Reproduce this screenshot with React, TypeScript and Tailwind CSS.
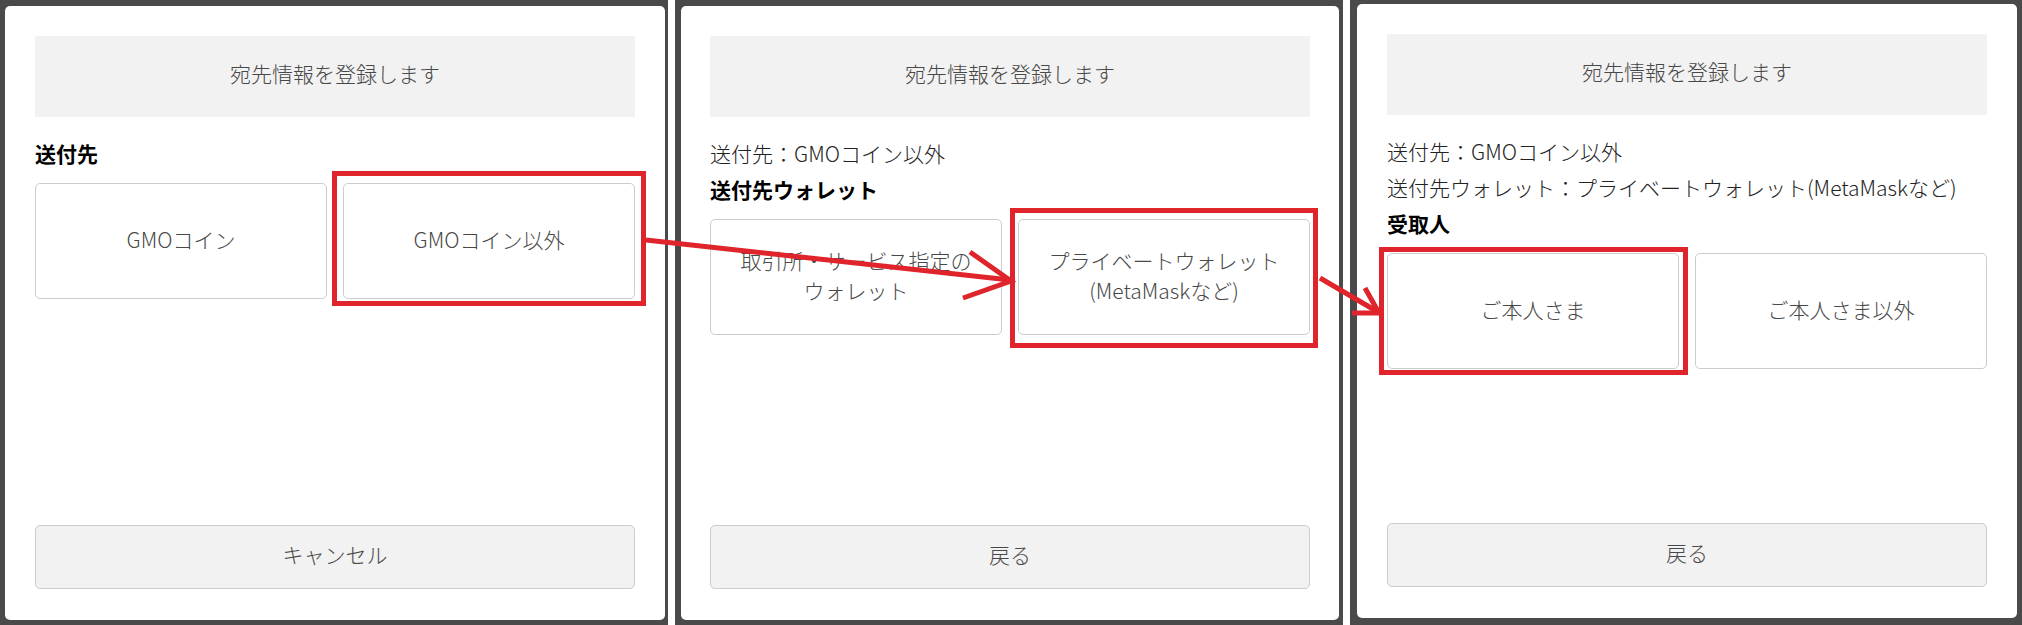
import React from "react";

type ChoiceProps = {
  children: React.ReactNode;
  mark?: string;
};

// option tile, optional red frame drawn over it
const Choice = ({ children, mark }: ChoiceProps) => (
  <div className="relative flex items-center justify-center rounded-[5px] border border-[#cccccc] bg-white pb-[5px] text-center text-[21px] leading-[30px] font-light text-[#484848]">
    <span>{children}</span>
    {mark && <div className={`absolute border-[5px] border-[#e0242b] ${mark}`} />}
  </div>
);

type ModalProps = {
  lines: string[];
  label: string;
  choices: React.ReactNode;
  footer: string;
  pad: string;
};

const Modal = ({ lines, label, choices, footer, pad }: ModalProps) => (
  <div className={`flex flex-1 flex-col rounded-[5px] bg-white pt-[30px] pb-[31px] ${pad}`}>
    <div className="flex h-[81px] items-center justify-center bg-[#f2f2f2] pb-[6px] text-[21px] font-light text-[#484848]">
      宛先情報を登録します
    </div>
    <div className="mt-[18px] text-[21px]">
      {lines.map((l) => (
        <p key={l} className="h-[36px] leading-[36px] font-light text-[#222222] whitespace-nowrap">
          {l}
        </p>
      ))}
      <p className="h-[36px] leading-[36px] font-bold text-black">{label}</p>
    </div>
    <div className="mt-[12px] grid h-[116px] grid-cols-2 gap-[16px]">{choices}</div>
    <div className="mt-auto flex h-[64px] items-center justify-center rounded-[5px] border border-[#cccccc] bg-[#f2f2f2] pb-[5px] text-[21px] font-light text-[#484848]">
      {footer}
    </div>
  </div>
);

export default function App() {
  return (
    <div className="relative flex h-[625px] w-[2022px] gap-[7px] overflow-hidden bg-white font-['Noto_Sans_CJK_JP','Noto_Sans',sans-serif]">
      {/* step 1 */}
      <div className="flex w-[668px] bg-[#4a4a4a] pl-[5px] pr-[3px] pt-[6px] pb-[5px]">
        <Modal
          pad="px-[30px]"
          lines={[]}
          label="送付先"
          footer="キャンセル"
          choices={
            <>
              <Choice>GMOコイン</Choice>
              <Choice mark="-left-[12px] -right-[12px] -top-[13px] -bottom-[8px]">GMOコイン以外</Choice>
            </>
          }
        />
      </div>

      {/* step 2 */}
      <div className="flex w-[668px] bg-[#4a4a4a] pl-[6px] pr-[4px] pt-[6px] pb-[5px]">
        <Modal
          pad="px-[29px]"
          lines={["送付先：GMOコイン以外"]}
          label="送付先ウォレット"
          footer="戻る"
          choices={
            <>
              <Choice>
                取引所・サービス指定の
                <br />
                ウォレット
              </Choice>
              <Choice mark="-left-[9px] -right-[9px] -top-[12px] -bottom-[14px]">
                プライベートウォレット
                <br />
                (MetaMaskなど)
              </Choice>
            </>
          }
        />
      </div>

      {/* step 3 */}
      <div className="flex flex-1 bg-[#4a4a4a] pl-[7px] pr-[5px] pt-[4px] pb-[7px]">
        <Modal
          pad="px-[30px]"
          lines={["送付先：GMOコイン以外", "送付先ウォレット：プライベートウォレット(MetaMaskなど)"]}
          label="受取人"
          footer="戻る"
          choices={
            <>
              <Choice mark="-left-[9px] -right-[10px] -top-[7px] -bottom-[7px]">ご本人さま</Choice>
              <Choice>ご本人さま以外</Choice>
            </>
          }
        />
      </div>

      {/* arrows */}
      <svg
        className="pointer-events-none absolute left-0 top-0"
        width="2022"
        height="625"
        viewBox="0 0 2022 625"
        fill="none"
        stroke="#e0242b"
        strokeWidth="5"
      >
        <path d="M646 240 L1010 280" />
        <path d="M970 252 L1011 281 L963 298" />
        <path d="M1320 278 L1378 312" />
        <path d="M1365 288 L1379 313 L1352 313" />
      </svg>
    </div>
  );
}
